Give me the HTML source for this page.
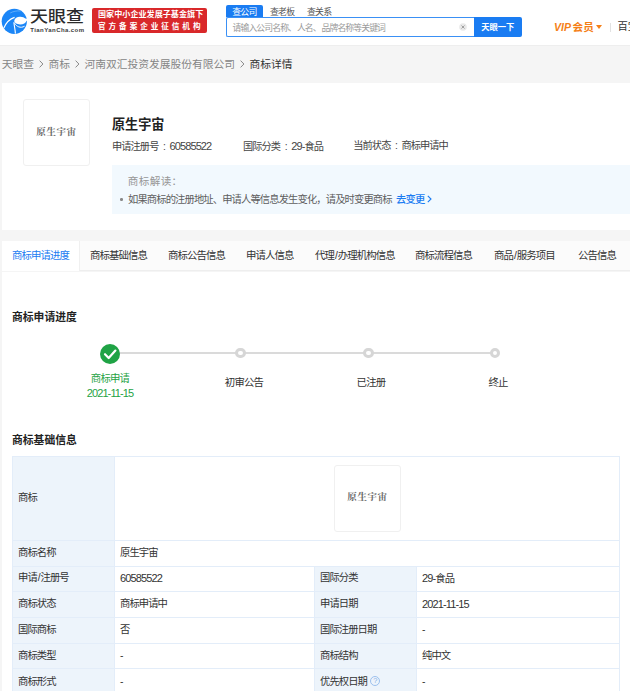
<!DOCTYPE html>
<html lang="zh-CN">
<head>
<meta charset="utf-8">
<title>商标详情 - 天眼查</title>
<style>
*{box-sizing:border-box;margin:0;padding:0}
html,body{width:630px;height:691px;overflow:hidden;background:#f5f5f5}
body{position:relative;font-family:"Liberation Sans","Noto Sans CJK SC",sans-serif;color:#333;font-size:9.5px;line-height:1}
.abs{position:absolute;white-space:nowrap}
/* header */
#hdr{left:0;top:0;width:630px;height:46.3px;background:#fff;border-bottom:1px solid #eee}
#logo-t{left:29.8px;top:7.4px;font-size:15.4px;font-weight:500;color:#2b2b2b;letter-spacing:0;line-height:20px;transform:scaleX(1.17);transform-origin:0 0}
#logo-s{left:30.3px;top:25.6px;font-size:6px;font-weight:700;color:#3a3a3a;letter-spacing:0.42px;line-height:8px}
#badge{left:92px;top:8px;width:115px;height:25px;background:#d9282a;border-radius:2px;color:#fff;font-weight:700}
#badge div{position:absolute;left:6px;white-space:nowrap;line-height:10px}
#b1{top:1.9px;font-size:8.1px;letter-spacing:0}
#b2{top:13.5px;font-size:7.6px;letter-spacing:2.95px}
.stab{font-size:8.9px;letter-spacing:-0.8px;top:7.2px;height:11px;line-height:11px;color:#555}
#st1{left:226.3px;width:37px;background:#1a7cf2;color:#fff;text-align:center;top:5.2px;height:12px;line-height:14.4px;text-indent:-0.8px;border-radius:2px 2px 0 0}
#sbox{left:226.3px;top:16.7px;width:248px;height:20.3px;border:1px solid #3a90f5;border-right:none;background:#fff;border-radius:2px 0 0 2px}
#sph{left:232.6px;top:23.2px;font-size:8.8px;letter-spacing:-0.87px;color:#9a9a9a;line-height:10px}
#sbtn{left:473.6px;top:16.7px;width:48.4px;height:20.3px;background:#1a7cf2;color:#fff;font-size:8.3px;text-align:center;line-height:20.3px;border-radius:0 2px 2px 0;font-weight:700}
#vip{left:554px;top:21px;font-size:10.6px;font-weight:700;color:#f57f17;line-height:12px}
/* crumbs */
#crumb{left:1.7px;top:57.8px;font-size:10.75px;color:#858585;line-height:13px}
#crumb b{font-weight:400;color:#333}
#crumb svg{margin:0 4.9px 0 5.1px;vertical-align:-0.5px}
/* card */
#card{left:1.5px;top:83px;width:629px;height:147px;background:#fff}
.tmimg{background:#fff;border:1px solid #f0f0f0;border-radius:3px}
.tmtxt{font-family:"Liberation Serif","Noto Serif CJK SC",serif;font-weight:700;color:#666;text-align:center}
#h1{left:112px;top:116.6px;font-size:13.1px;font-weight:700;color:#222;line-height:16px}
.meta{top:140px;font-size:10.2px;letter-spacing:-0.9px;color:#444;line-height:12px}
#note{left:112px;top:164.6px;width:518px;height:49.2px;background:#f2f9fe}
#n1{left:127.8px;top:174.8px;font-size:10.6px;color:#969696;line-height:12px;letter-spacing:0.35px}
#n2{left:128px;top:193.6px;font-size:10.3px;letter-spacing:-0.88px;color:#5e5e5e;line-height:12px}
/* tabs */
#tabs{left:1.5px;top:240.7px;width:629px;height:30px;background:#fbfbfb;border-bottom:1px solid #eee}
.tab{top:250px;font-size:10.4px;letter-spacing:-0.9px;line-height:12px;color:#333}
#main{left:1.5px;top:271.5px;width:629px;height:420px;background:#fff}
.h2{font-size:10.8px;font-weight:700;color:#222;line-height:13px}
/* steps */
.sline{height:2.2px;background:#dadada;top:352.1px}
.sdot{width:10.4px;height:10.4px;border-radius:50%;border:3.1px solid #d6d6d6;background:#fff;top:348.1px}
.slab{font-size:10.4px;letter-spacing:-0.8px;line-height:12px;color:#333;text-align:center;width:80px}
/* table */
#tbl{left:12px;top:456px;width:607.5px;height:240px;border:1px solid #e3edf9;background:#fff}
.th{background:#edf4fb}
.hl{left:12px;width:607.5px;height:1px;background:#e3edf9}
.vl{width:1px;background:#e3edf9}
.sl0{letter-spacing:0}
.sl{letter-spacing:0;padding-left:0.9px}
.col{display:inline-block;width:11px;text-align:center}
.num{font-size:11px;letter-spacing:-0.88px}
.c{font-size:10.3px;letter-spacing:-0.9px;line-height:12px;color:#333}
</style>
</head>
<body>
<div id="hdr" class="abs"></div>
<svg class="abs" style="left:1px;top:8px" width="27" height="27" viewBox="0 0 27 27">
  <circle cx="13.3" cy="13.3" r="12.6" fill="#1b86f7"/>
  <path d="M13.3 12.6 C13.7 9.8 16.6 8.5 19.4 8.7 C21.6 8.8 23.4 9.6 24.4 10.6 L26.6 10.9 L26.6 12.8 L25.7 12.7 C24.8 14.8 22.4 16.4 19.2 16.4 C15.8 16.4 13 15.1 13.3 12.6Z" fill="#fff"/>
  <path d="M2.9 20 C5 15 8.6 11 13.6 9.4" fill="none" stroke="#fff" stroke-width="1.15"/>
  <path d="M14.4 25.6 C14.2 21.5 13.2 18 12.9 14.2" fill="none" stroke="#fff" stroke-width="1.15"/>
  <path d="M13.6 15.2 C15.5 18.6 19.5 20.6 23.6 18.2" fill="none" stroke="#fff" stroke-width="1"/>
  <path d="M9.2 5 C12 3.4 16 2.6 19.4 3" fill="none" stroke="#8cc4fb" stroke-width="0.6"/>
</svg>
<div id="logo-t" class="abs">天眼查</div>
<div id="logo-s" class="abs">TianYanCha.com</div>
<div id="badge" class="abs"><div id="b1">国家中小企业发展子基金旗下</div><div id="b2">官方备案企业征信机构</div></div>
<div id="st1" class="abs stab">查公司</div>
<div class="abs stab" style="left:270px">查老板</div>
<div class="abs stab" style="left:307px">查关系</div>
<div id="sbox" class="abs"></div>
<div id="sph" class="abs">请输入公司名称<span class="sl0">、</span>人名<span class="sl0">、</span>品牌名称等关键词</div>
<svg class="abs" style="left:459.3px;top:23.2px" width="8" height="8" viewBox="0 0 8 8"><circle cx="4" cy="4" r="3.8" fill="#e9e9e9"/><path d="M2.5 2.5 L5.5 5.5 M5.5 2.5 L2.5 5.5" stroke="#8c8c8c" stroke-width="0.8" fill="none"/></svg>
<div id="sbtn" class="abs">天眼一下</div>
<div id="vip" class="abs"><span style="font-style:italic;padding-right:1.5px">VIP</span>会员</div>
<div class="abs" style="left:596.3px;top:25px;width:0;height:0;border-left:3.5px solid transparent;border-right:3.5px solid transparent;border-top:4px solid #f57f17"></div>
<div class="abs" style="left:610px;top:22.5px;width:1px;height:9px;background:#e2e2e2"></div>
<div class="abs" style="left:617.4px;top:21.3px;font-size:10.3px;line-height:12px;color:#333">百宝</div>

<div id="crumb" class="abs">天眼查<svg width="4.5" height="8" viewBox="0 0 4.5 8"><path d="M0.6 0.6 L3.9 4 L0.6 7.4" fill="none" stroke="#888" stroke-width="1"/></svg>商标<svg width="4.5" height="8" viewBox="0 0 4.5 8"><path d="M0.6 0.6 L3.9 4 L0.6 7.4" fill="none" stroke="#888" stroke-width="1"/></svg>河南双汇投资发展股份有限公司<svg width="4.5" height="8" viewBox="0 0 4.5 8"><path d="M0.6 0.6 L3.9 4 L0.6 7.4" fill="none" stroke="#888" stroke-width="1"/></svg><b>商标详情</b></div>

<div id="card" class="abs"></div>
<div class="abs tmimg" style="left:23px;top:99px;width:67px;height:67px"></div>
<div class="abs tmtxt" style="left:23px;top:126.5px;width:67px;font-size:9.5px;line-height:11px;letter-spacing:0.6px">原生宇宙</div>
<div id="h1" class="abs">原生宇宙</div>
<div class="abs meta" style="left:112px">申请注册号<span class="col">:</span><span class="num">60585522</span></div>
<div class="abs meta" style="left:243px">国际分类<span class="col">:</span><span class="num">29-</span>食品</div>
<div class="abs meta" style="left:353.3px">当前状态<span class="col">:</span>商标申请中</div>
<div id="note" class="abs"></div>
<div id="n1" class="abs">商标解读：</div>
<div class="abs" style="left:120px;top:198px;width:2.5px;height:2.5px;border-radius:50%;background:#888"></div>
<div id="n2" class="abs">如果商标的注册地址、申请人等信息发生变化，请及时变更商标 <span style="color:#1a7cf2;padding-left:2.4px;font-size:10.3px;letter-spacing:-0.85px;font-weight:500">去变更</span><svg width="5" height="8" viewBox="0 0 5 8" style="margin-left:2.4px;vertical-align:-0.8px"><path d="M0.8 0.8 L4 4 L0.8 7.2" fill="none" stroke="#1a7cf2" stroke-width="1.1"/></svg></div>

<div id="tabs" class="abs"></div>
<div class="abs" style="left:1.5px;top:240.7px;width:78px;height:30px;background:#fff;border-right:1px solid #f0f0f0"></div>
<div class="abs tab" style="left:12px;color:#1a7cf2">商标申请进度</div>
<div class="abs tab" style="left:90px">商标基础信息</div>
<div class="abs tab" style="left:168px">商标公告信息</div>
<div class="abs tab" style="left:246px">申请人信息</div>
<div class="abs tab" style="left:315px">代理<span class="sl">/</span>办理机构信息</div>
<div class="abs tab" style="left:415px">商标流程信息</div>
<div class="abs tab" style="left:494px">商品<span class="sl">/</span>服务项目</div>
<div class="abs tab" style="left:578px">公告信息</div>

<div id="main" class="abs"></div>
<div class="abs h2" style="left:12px;top:311.4px">商标申请进度</div>

<div class="abs sline" style="left:118px;width:377px"></div>
<div class="abs" style="left:99.6px;top:343.5px;width:20px;height:20px;border-radius:50%;background:#1fa345"></div>
<svg class="abs" style="left:99.6px;top:343.5px" width="20" height="20" viewBox="0 0 20 20"><path d="M5 10.2 L8.7 14 L15.4 6.6" fill="none" stroke="#fff" stroke-width="2.2" stroke-linecap="round" stroke-linejoin="round"/></svg>
<div class="abs sdot" style="left:235.4px"></div>
<div class="abs sdot" style="left:363.3px"></div>
<div class="abs sdot" style="left:489.8px"></div>
<div class="abs slab" style="left:70px;top:373.4px;color:#1fa345">商标申请</div>
<div class="abs slab" style="left:70px;top:387px;color:#1fa345;font-size:9.6px"><span class="num">2021-11-15</span></div>
<div class="abs slab" style="left:204px;top:376.8px">初审公告</div>
<div class="abs slab" style="left:331px;top:376.8px">已注册</div>
<div class="abs slab" style="left:458px;top:376.8px">终止</div>

<div class="abs h2" style="left:12px;top:434.2px">商标基础信息</div>

<div id="tbl" class="abs"></div>
<div class="abs th" style="left:13px;top:457px;width:101px;height:234px"></div>
<div class="abs th" style="left:314.3px;top:567px;width:102px;height:124px"></div>
<div class="abs vl" style="left:114px;top:457px;height:234px"></div>
<div class="abs vl" style="left:313.6px;top:566px;height:125px"></div>
<div class="abs vl" style="left:416px;top:566px;height:125px"></div>
<div class="abs hl" style="top:540px"></div>
<div class="abs hl" style="top:566px"></div>
<div class="abs hl" style="top:591px"></div>
<div class="abs hl" style="top:617px"></div>
<div class="abs hl" style="top:642.5px"></div>
<div class="abs hl" style="top:668.4px"></div>

<div class="abs tmimg" style="left:334px;top:465px;width:67px;height:67px"></div>
<div class="abs tmtxt" style="left:334px;top:492px;width:67px;font-size:9.5px;line-height:11px;letter-spacing:0.6px">原生宇宙</div>

<div class="abs c" style="left:18px;top:491.9px">商标</div>
<div class="abs c" style="left:18px;top:546.9px">商标名称</div>
<div class="abs c" style="left:120px;top:546.9px">原生宇宙</div>
<div class="abs c" style="left:18px;top:571.9px">申请<span class="sl">/</span>注册号</div>
<div class="abs c" style="left:120px;top:571.9px"><span class="num">60585522</span></div>
<div class="abs c" style="left:320px;top:571.9px">国际分类</div>
<div class="abs c" style="left:422px;top:571.9px"><span class="num">29-</span>食品</div>
<div class="abs c" style="left:18px;top:597.9px">商标状态</div>
<div class="abs c" style="left:120px;top:597.9px">商标申请中</div>
<div class="abs c" style="left:320px;top:597.9px">申请日期</div>
<div class="abs c" style="left:422px;top:597.9px"><span class="num">2021-11-15</span></div>
<div class="abs c" style="left:18px;top:623.9px">国际商标</div>
<div class="abs c" style="left:120px;top:623.9px">否</div>
<div class="abs c" style="left:320px;top:623.9px">国际注册日期</div>
<div class="abs c" style="left:422px;top:623.9px">-</div>
<div class="abs c" style="left:18px;top:649.5px">商标类型</div>
<div class="abs c" style="left:120px;top:649.5px">-</div>
<div class="abs c" style="left:320px;top:649.5px">商标结构</div>
<div class="abs c" style="left:422px;top:649.5px">纯中文</div>
<div class="abs c" style="left:18px;top:675.5px">商标形式</div>
<div class="abs c" style="left:120px;top:675.5px">-</div>
<div class="abs c" style="left:320px;top:675.5px">优先权日期</div>
<div class="abs" style="left:370.3px;top:675.6px;width:10px;height:10px;border-radius:50%;border:1px solid #9cc0ee;color:#86b0e6;font-size:7.5px;line-height:8px;text-align:center">?</div>
<div class="abs c" style="left:422px;top:675.5px">-</div>
</body>
</html>
